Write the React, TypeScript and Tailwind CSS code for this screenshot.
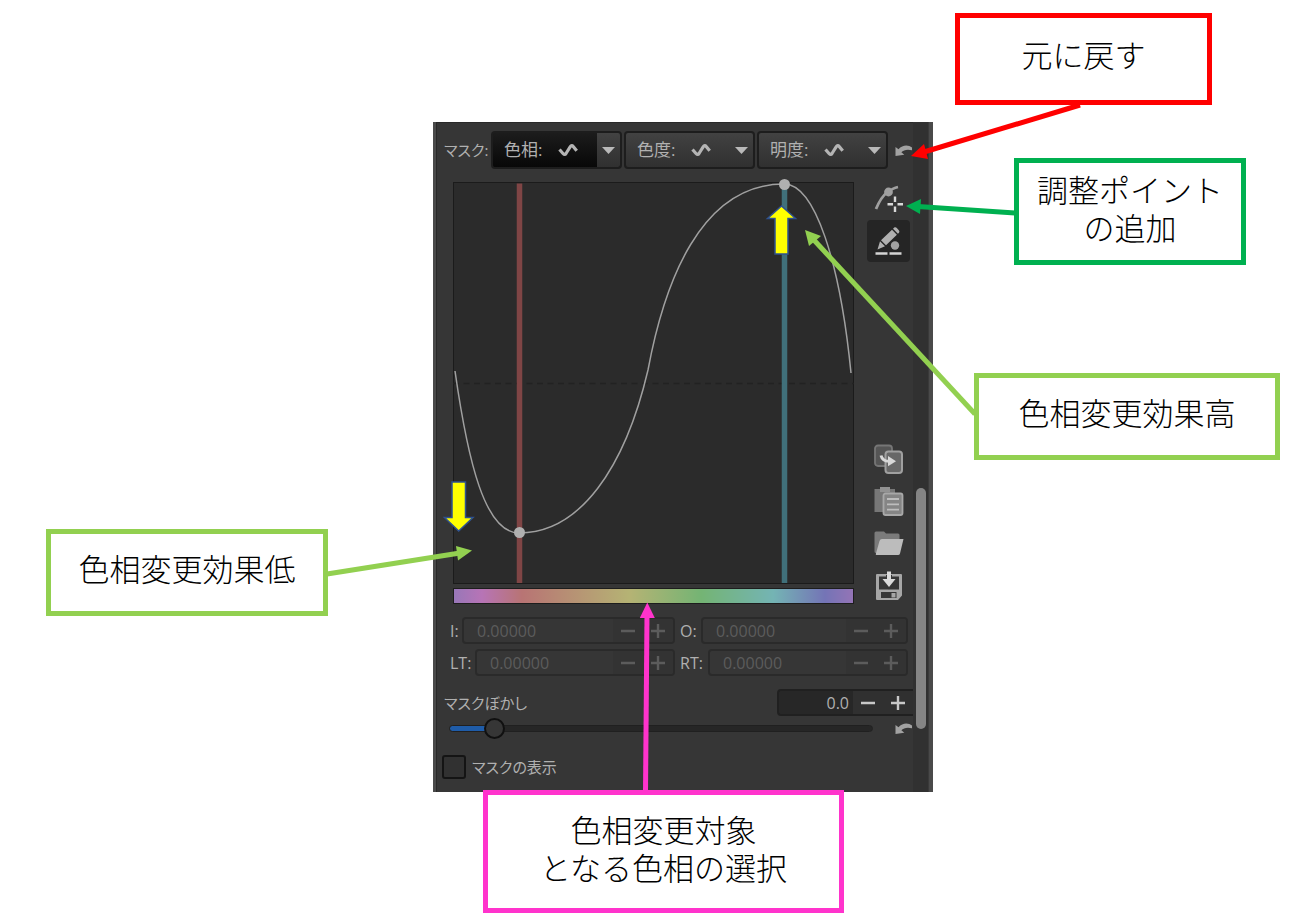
import { useState, type ReactNode } from "react";
import clsx from "clsx";

const channels = [
  { id: "hue", label: "色相:" },
  { id: "chroma", label: "色度:" },
  { id: "lightness", label: "明度:" },
];

const callouts = [
  { lines: ["元に戻す"], className: "left-[522px] top-[-109px] h-[92px] w-[257px] border-[#ff0000] pt-[17px]" },
  { lines: ["調整ポイント", "の追加"], className: "left-[581px] top-[36px] h-[107px] w-[232px] border-[#00b050] pt-[7px]" },
  { lines: ["色相変更効果高"], className: "left-[541px] top-[251px] h-[87px] w-[306px] border-[#92d050] pt-[15px]" },
  { lines: ["色相変更効果低"], className: "left-[-387px] top-[407px] h-[87px] w-[282px] border-[#92d050] pt-[15px]" },
  { lines: ["色相変更対象", "となる色相の選択"], className: "left-[50px] top-[668px] h-[123px] w-[361px] border-[#ff33cc] pt-[15px]" },
];

function CurveIcon() {
  return (
    <svg width="20" height="16" viewBox="0 0 20 16" fill="none" stroke="#b4b4b4" strokeWidth="3.200">
      <path d="M1.500 7.500l3.700 4.200c1 1 2 1 2.800-.2l4.300-6.800c.9-1.300 2-1.300 2.900-.2l3.500 4.300" />
    </svg>
  );
}

function UndoIcon() {
  return (
    <svg width="17" height="13" viewBox="0 0 17 13" fill="#a2a2a2">
      <path d="M.5 3v9l8.800-1.200-2.900-2.500C8.500 6 12 5 17 6.200V3.500C13.500.5 7.500.5 3.500 5.200z" />
    </svg>
  );
}

function AddPointIcon() {
  return (
    <svg width="32" height="32" viewBox="0 0 32 32" fill="none">
      <path d="M3 26Q8 14 14 9.500T25 4" stroke="#a0a0a0" strokeWidth="2.800" />
      <circle cx="15.500" cy="9" r="4.400" fill="#a0a0a0" />
      <path d="M22 13.500v5.500M22 23.500V29M14.500 21.300H20M24.500 21.300H30" stroke="#d8d8d8" strokeWidth="2.400" />
    </svg>
  );
}

function PencilIcon() {
  return (
    <svg width="32" height="32" viewBox="0 0 32 32">
      <path d="M4.500 24.500l2.500-8.200 5 5zM8 15.200L19 4.800l4.900 5L13 20.300zM20 3.800l1-1c1-.8 2-.6 2.800.2l2 2.200c.8.900.8 1.800 0 2.700l-.9.900z" fill="#b0b0b0" />
      <circle cx="22" cy="20.500" r="4.200" fill="#a2a2a2" />
      <path d="M2.500 28.500h12M16.500 28.500h12" stroke="#d4d4d4" strokeWidth="2.600" />
    </svg>
  );
}

function CopyIcon() {
  return (
    <svg width="32" height="32" viewBox="0 0 32 32" fill="none">
      <rect x="2" y="1.500" width="17" height="20.500" rx="3" fill="#555" stroke="#767676" strokeWidth="1.800" />
      <rect x="12.500" y="7.500" width="16.500" height="21.500" rx="3" fill="#686868" stroke="#a0a0a0" strokeWidth="2" />
      <path d="M8 11.500q1.500 6 8.500 5.800" stroke="#d8d8d8" strokeWidth="3" />
      <path d="M15 12l8 5.200-8 5z" fill="#d8d8d8" />
    </svg>
  );
}

function PasteIcon() {
  return (
    <svg width="32" height="32" viewBox="0 0 32 32">
      <path d="M1.500 3h20.500v23H1.500z" fill="#777" />
      <path d="M7 1h10v5H7z" fill="#929292" />
      <rect x="10.500" y="7.500" width="19" height="21.500" rx="2" fill="#858585" stroke="#a8a8a8" strokeWidth="1.800" />
      <path d="M14 13h12M14 18.300h12M14 23.600h12" stroke="#bdbdbd" strokeWidth="1.800" />
    </svg>
  );
}

function FolderIcon() {
  return (
    <svg width="32" height="32" viewBox="0 0 32 32">
      <path d="M1.500 5q0-1.500 1.500-1.500h8l2 2h12q1.500 0 1.500 1.500v18H3q-1.500 0-1.500-1.500z" fill="#7b7b7b" />
      <path d="M9 11h21.500l-3.500 14.500q-.4 1.500-2 1.500H3.500q-1 0-.7-1L6.500 13q.5-2 2.500-2z" fill="#bcbcbc" />
    </svg>
  );
}

function SaveIcon() {
  return (
    <svg width="32" height="32" viewBox="0 0 32 32">
      <path
        fillRule="evenodd"
        d="M4 4h24q1 0 1 1v20.500L25 30H4q-1 0-1-1V5q0-1 1-1zM6 6.500v13h20v-13zM8 22v6h15.500v-6z"
        fill="#a6a6a6"
      />
      <path d="M18.500 23h4v4.500h-4z" fill="#a6a6a6" />
      <path d="M13 5h6v6h5.500L16 19.500 7.500 11H13z" fill="#363636" />
      <path d="M14 1.500h4v7.500h4.500l-6.500 8-6.500-8H14z" fill="#dadada" />
    </svg>
  );
}

function SignIcon({ plus }: { plus?: boolean }) {
  return (
    <svg width="14" height="14" viewBox="0 0 14 14" stroke="currentColor" strokeWidth="2.400">
      <path d={plus ? "M0 7h14M7 0v14" : "M0 7h14"} />
    </svg>
  );
}

function ToolButton({ label, active, children }: { label: string; active?: boolean; children: ReactNode }) {
  return (
    <button
      aria-label={label}
      className={clsx(
        "flex h-[42px] w-[43px] items-center justify-center rounded",
        active && "bg-[#252525]"
      )}
    >
      {children}
    </button>
  );
}

function ChannelButton({ label, active, onClick }: { label: string; active: boolean; onClick: () => void }) {
  return (
    <div
      className={clsx(
        "flex h-[38px] w-[131px] overflow-hidden rounded border-2 border-[#1d1d1d]",
        active ? "bg-linear-to-b from-[#1c1c1c] to-[#080808]" : "bg-linear-to-b from-[#424242] to-[#303030]"
      )}
    >
      <button onClick={onClick} className="flex flex-1 items-center gap-4 pl-[11px] text-[17px]">
        {label}
        <CurveIcon />
      </button>
      <button
        aria-label={`${label} メニュー`}
        className={clsx("flex w-[23px] items-center justify-center", active && "bg-linear-to-b from-[#424242] to-[#303030]")}
      >
        <svg width="13" height="7" viewBox="0 0 13 7">
          <path d="M0 0h13L6.500 7z" fill="#b9b9b9" />
        </svg>
      </button>
    </div>
  );
}

function NumberField({ id, label, labelClass }: { id: string; label: string; labelClass: string }) {
  return (
    <div className="flex items-center">
      <label htmlFor={id} className={clsx("shrink-0", labelClass)}>
        {label}
      </label>
      <div className="flex h-[27px] min-w-0 flex-1 overflow-hidden rounded border-2 border-[#2a2a2a] text-[#5c5c5c]">
        <input id={id} disabled defaultValue="0.00000" className="w-0 min-w-0 flex-1 pl-[13px] outline-none" />
        <button disabled aria-label={`${label} −`} className="flex w-[30px] items-center justify-center bg-[#333333]">
          <SignIcon />
        </button>
        <button disabled aria-label={`${label} +`} className="flex w-[30px] items-center justify-center bg-[#333333]">
          <SignIcon plus />
        </button>
      </div>
    </div>
  );
}

function CurveEditor() {
  return (
    <svg viewBox="453 182 401 402" className="w-full" role="img" aria-label="色相カーブ">
      <rect x="453.500" y="182.500" width="400" height="401" fill="#2b2b2b" stroke="#1b1b1b" />
      <path d="M453 383.500h401" stroke="#222222" strokeWidth="1.500" strokeDasharray="6 4.500" />
      <path d="M519.500 183.500V583" stroke="#7f4545" strokeWidth="5.500" />
      <path d="M784.500 183.500V583" stroke="#40707a" strokeWidth="5.500" />
      <path
        d="M455 371C468 462 485 533 519 533C580 533 625 468 648 370C664 284 700 184 784 184C815 184 840 262 851 373"
        fill="none"
        stroke="#a0a0a0"
        strokeWidth="1.500"
      />
      <circle cx="519.500" cy="532.500" r="5.500" fill="#b0b0b0" />
    </svg>
  );
}

// Arrows are drawn in page units, shifted back by the panel's own origin
function Arrows() {
  return (
    <svg className="pointer-events-none absolute left-0 top-0 overflow-visible" width="500" height="670" aria-hidden="true">
      <g transform="translate(-433 -122)">
        <circle cx="784.500" cy="184.500" r="5.500" fill="#b0b0b0" />
        <g strokeWidth="5">
          <path d="M1080 105L924 152" stroke="#ff0000" />
          <path d="M911 156l13-12 4 15z" fill="#ff0000" />
          <path d="M1015 213L918 206.500" stroke="#00b050" />
          <path d="M906 206l15-7-1 15z" fill="#00b050" />
          <path d="M975 414L813 239" stroke="#92d050" />
          <path d="M805 230l16 6-12 10z" fill="#92d050" />
          <path d="M327 574L460 553" stroke="#92d050" />
          <path d="M472 550.500l-16-4.500 2 14.500z" fill="#92d050" />
          <path d="M645.500 792L647 615" stroke="#ff33cc" />
          <path d="M647.300 602.500l7.500 15.500h-15z" fill="#ff33cc" />
        </g>
        <g fill="#ffff00" stroke="#2f528f" strokeWidth="1.500">
          <path d="M452 482h13.500v35.500h7.500L458.700 531 444.500 517.500h7.500z" />
          <path d="M775 254v-35.500h-7.500L781.500 206l14 12.500H788V254z" />
        </g>
      </g>
    </svg>
  );
}

export default function App() {
  const [channel, setChannel] = useState("hue");

  return (
    <main className="flex min-h-screen justify-center overflow-hidden bg-white pl-[75px] pt-[122px] font-['Open_Sans','Noto_Sans_CJK_JP',sans-serif]">
      <div className="relative w-[500px] shrink-0 self-start">
        <section className="flex border-l-[3px] border-r-4 border-[#4a4a4a] bg-[#363636] text-[16px] leading-6 text-[#b0b0b0]">
          <div className="min-w-0 flex-1 border-l border-t border-[#292929] pb-[13px] pt-2">
            <div className="flex items-center pl-[7px]">
              <span className="w-[47px] whitespace-nowrap text-[15px] [font-feature-settings:'palt']">マスク:</span>
              <div className="flex gap-[2px]">
                {channels.map((c) => (
                  <ChannelButton
                    key={c.id}
                    label={c.label}
                    active={channel === c.id}
                    onClick={() => setChannel(c.id)}
                  />
                ))}
              </div>
              <button aria-label="元に戻す" className="ml-[7px]">
                <UndoIcon />
              </button>
            </div>

            <div className="mt-[9px] flex justify-between pl-4 pr-[3px]">
              <div className="w-[401px] pb-[3px] pt-1">
                <CurveEditor />
                <div className="mt-1 h-4 border border-[#1d1d1d] bg-[linear-gradient(90deg,#9877b8,#b774b6_7%,#b87474_17%,#b5b374_44%,#74b474_62%,#74b4b4_80%,#7474b6_93%,#9474b6)]" />
              </div>
              <div className="flex flex-col">
                <ToolButton label="調整ポイントの追加">
                  <AddPointIcon />
                </ToolButton>
                <ToolButton label="編集" active>
                  <PencilIcon />
                </ToolButton>
                <div className="mt-auto">
                  <ToolButton label="コピー">
                    <CopyIcon />
                  </ToolButton>
                  <ToolButton label="貼り付け">
                    <PasteIcon />
                  </ToolButton>
                  <ToolButton label="開く">
                    <FolderIcon />
                  </ToolButton>
                  <ToolButton label="保存">
                    <SaveIcon />
                  </ToolButton>
                </div>
              </div>
            </div>

            <div className="mt-[10px] grid grid-cols-[225fr_228fr] gap-[5px] pl-[13px] pr-[5px]">
              <NumberField id="in" label="I:" labelClass="w-3" />
              <NumberField id="out" label="O:" labelClass="w-[21px]" />
              <NumberField id="lt" label="LT:" labelClass="w-[25px]" />
              <NumberField id="rt" label="RT:" labelClass="w-7" />
            </div>

            <div className="mt-[13px] flex items-center justify-between pl-[7px]">
              <label htmlFor="blur" className="text-[15px] [font-feature-settings:'palt']">
                マスクぼかし
              </label>
              <div className="flex h-[27px] w-[136px] overflow-hidden rounded-l border-2 border-r-0 border-[#202020] bg-[#272727]">
                <input id="blur" defaultValue="0.0" className="w-0 min-w-0 flex-1 pr-1 text-right outline-none" />
                <button aria-label="減らす" className="flex w-[30px] items-center justify-center bg-[#303030] text-[#c8c8c8]">
                  <SignIcon />
                </button>
                <button aria-label="増やす" className="flex w-[30px] items-center justify-center bg-[#303030] text-[#c8c8c8]">
                  <SignIcon plus />
                </button>
              </div>
            </div>

            <div className="mt-px flex items-center pl-3">
              <input
                type="range"
                aria-label="マスクぼかし"
                min={0}
                max={100}
                step={0.5}
                defaultValue={8.5}
                className="h-[22px] w-[424px] appearance-none bg-transparent [&::-webkit-slider-runnable-track]:h-[7px] [&::-webkit-slider-runnable-track]:rounded-full [&::-webkit-slider-runnable-track]:border [&::-webkit-slider-runnable-track]:border-[#202020] [&::-webkit-slider-runnable-track]:bg-[linear-gradient(90deg,#1f5ca8_45px,#262626_45px)] [&::-webkit-slider-thumb]:mt-[-8px] [&::-webkit-slider-thumb]:size-[21px] [&::-webkit-slider-thumb]:appearance-none [&::-webkit-slider-thumb]:rounded-full [&::-webkit-slider-thumb]:border-2 [&::-webkit-slider-thumb]:border-[#101010] [&::-webkit-slider-thumb]:bg-[#363636]"
              />
              <button aria-label="リセット" className="ml-[22px]">
                <UndoIcon />
              </button>
            </div>

            <div className="mt-4 flex items-center gap-[6px] pl-[5px]">
              <input
                id="show-mask"
                type="checkbox"
                className="size-6 appearance-none rounded-[3px] border-2 border-[#141414] bg-[#313131] checked:bg-[#1f5ca8]"
              />
              <label htmlFor="show-mask" className="text-[15px] [font-feature-settings:'palt']">
                マスクの表示
              </label>
            </div>
          </div>

          <div className="w-4 border-r border-[#3a3a3a] bg-[#313131] pl-[3px] pt-[366px]">
            <div className="h-[241px] w-[10px] rounded-full bg-[#858585]" />
          </div>
        </section>

        {callouts.map((c) => (
          <div
            key={c.lines[0]}
            className={clsx(
              "absolute flex flex-col items-center border-5 bg-white font-['Noto_Sans_CJK_JP',sans-serif] text-[31px] font-light leading-[38px] text-black",
              c.className
            )}
          >
            {c.lines.map((line) => (
              <span key={line} className="whitespace-nowrap">
                {line}
              </span>
            ))}
          </div>
        ))}

        <Arrows />
      </div>
    </main>
  );
}
